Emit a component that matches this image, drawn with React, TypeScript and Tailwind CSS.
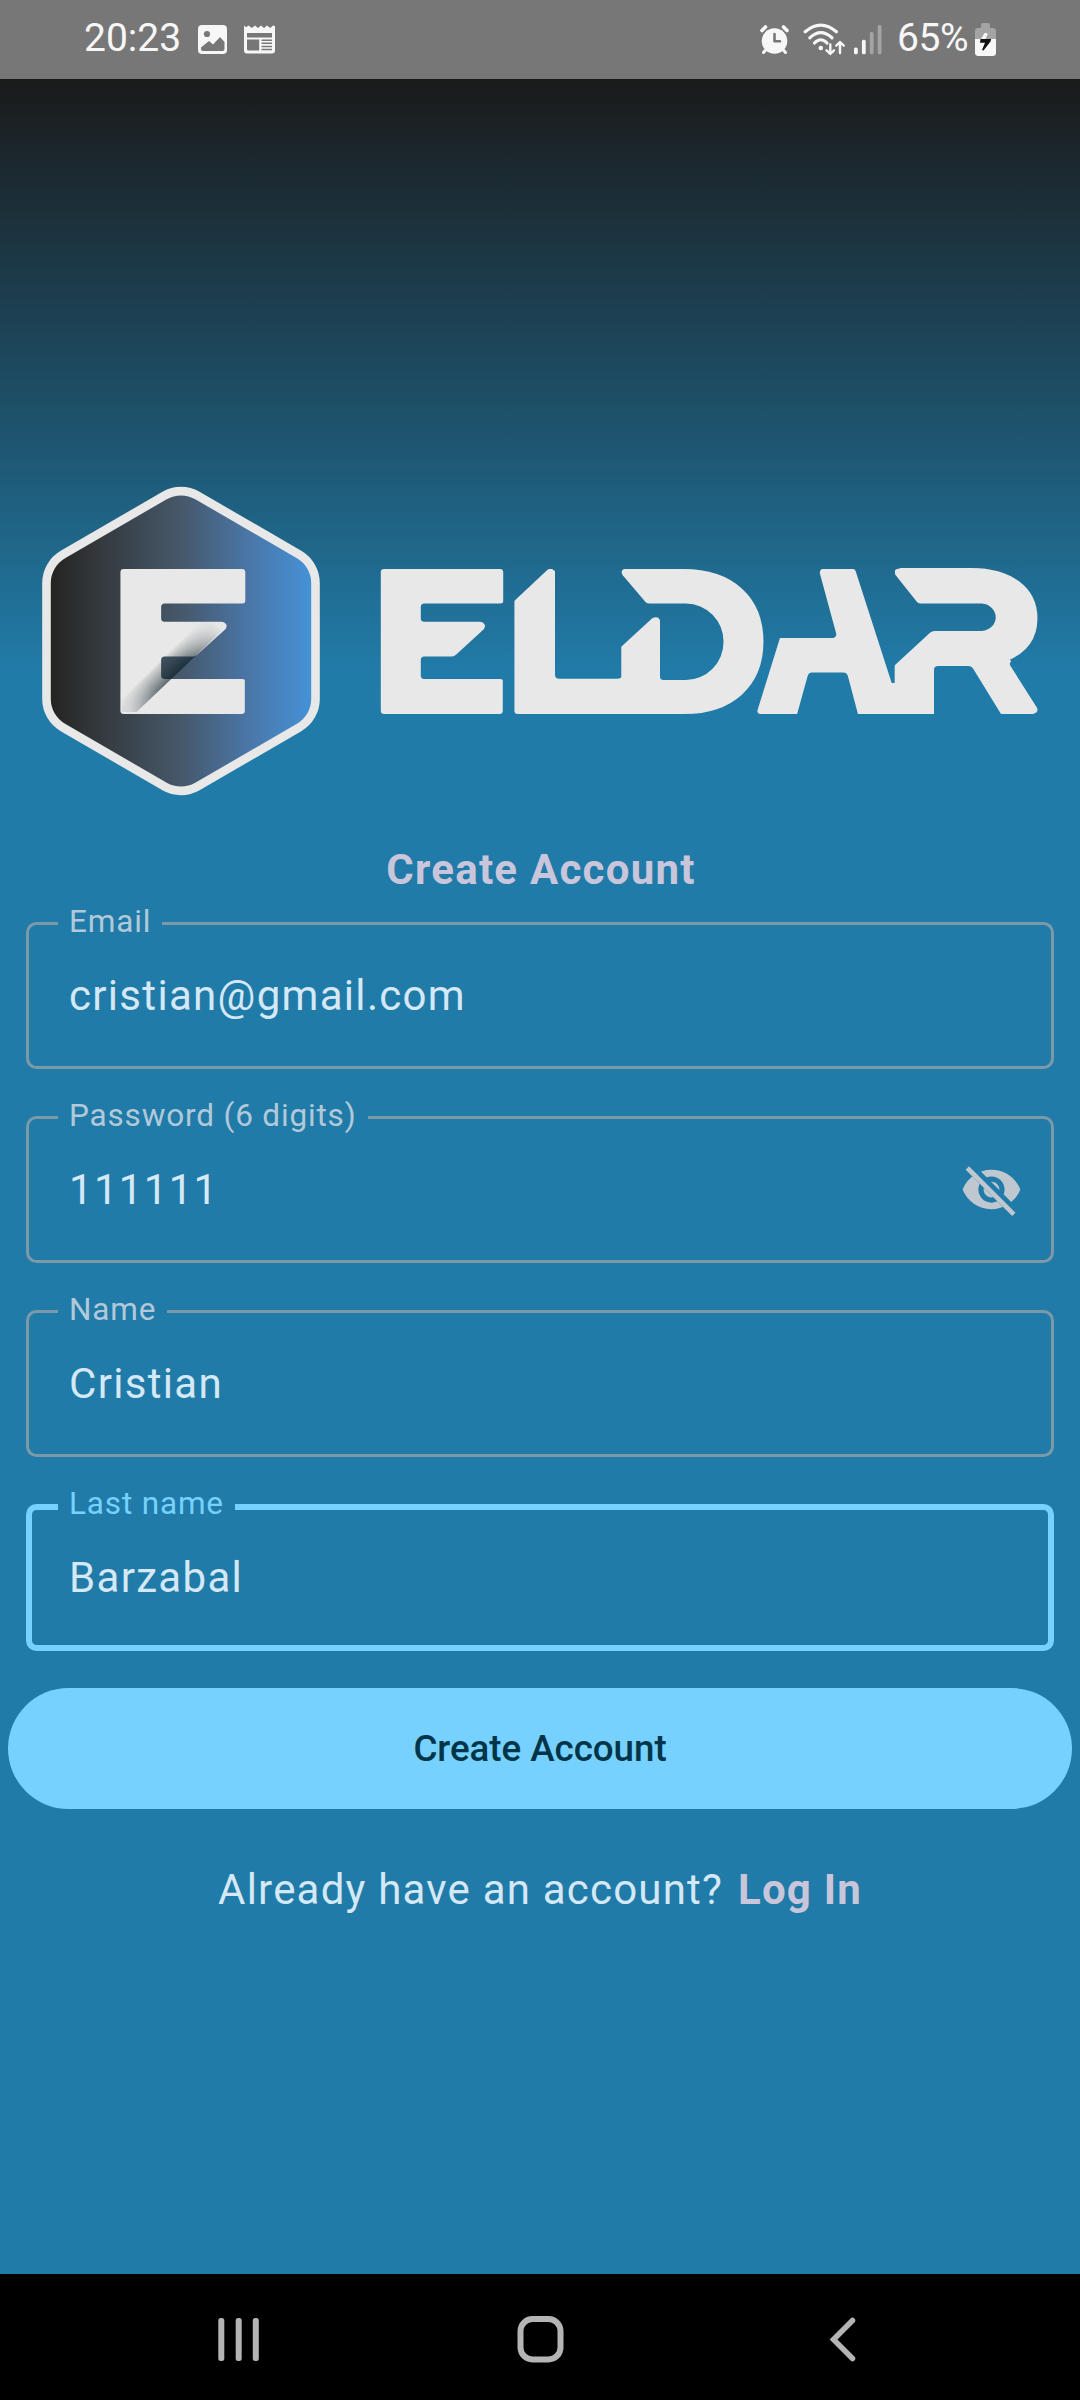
import type { ReactNode } from "react";

const INK = "#e8e8e8";

function StatusBar() {
  return (
    <header className="flex h-[79px] items-start bg-[#777777] font-[Roboto] text-[39px] leading-[47px] text-[#f7f7f7]">
      <div className="ml-[84px] mt-[14.5px] w-[100px]">20:23</div>
      <svg className="ml-[14px] mt-[25px] size-[29px]" viewBox="0 0 29 29">
        <rect width="29" height="29" rx="4" fill="#f7f7f7" />
        <circle cx="9" cy="9" r="3.1" fill="#777777" />
        <path d="M3 22.5 L11 16 L15 19.5 L22 12 L26.5 17 V24 Q26.5 26 24.5 26 H5 Q3 26 3 24 Z" fill="#777777" />
      </svg>
      <svg className="ml-[17px] mt-[25px] h-[29px] w-[31px]" viewBox="0 0 31 29">
        <path d="M0 .5 L2 2.3 L4.5 .5 L7.8 3 L11 .5 L14 3 L17 .5 L20 3 L23 .5 L26.3 3 L29 .5 L31 1 V25.5 Q31 28.5 28 28.5 H3 Q0 28.5 0 25.5 Z" fill="#f7f7f7" />
        <path d="M3 8 H28 V12.5 H3 Z M3 14.5 H15.2 V25.5 H4.5 Q3 25.5 3 24 Z M17.5 14.5 H28 V16 H17.5 Z M17.5 17.6 H28 V19.1 H17.5 Z M17.5 20.7 H28 V22.2 H17.5 Z M17.5 23.8 H28 V25.3 H17.5 Z" fill="#777777" />
      </svg>
      <svg className="ml-[485px] mt-[24px] h-[31px] w-[29px]" viewBox="0 0 29 31">
        <g fill="none" stroke="#f7f7f7" strokeLinecap="round">
          <path d="M2 6.5 L5.5 3 M27 6.5 L23.5 3" strokeWidth="3.6" />
          <path d="M6.5 25 L3.5 28.5 M22.5 25 L25.5 28.5" strokeWidth="3" />
        </g>
        <circle cx="14.5" cy="17" r="12.8" fill="#f7f7f7" />
        <path d="M14.5 10 V17.3 H20" fill="none" stroke="#777777" strokeWidth="2.6" strokeLinecap="round" strokeLinejoin="round" />
      </svg>
      <svg className="ml-[13px] mt-[22px] h-[34px] w-[44px]" viewBox="0 0 44 34">
        <g fill="none" stroke="#f7f7f7" strokeLinecap="round">
          <path d="M3.2 9.8 Q18.8 -3.5 34.4 9.8" strokeWidth="3.2" />
          <path d="M7.8 15.8 Q18.8 5.5 30 15.8" strokeWidth="3.2" />
          <path d="M12.5 21 Q18.8 14.5 25 21" strokeWidth="3.2" />
          <path d="M28.3 22.5 V31 M24.6 28.3 L28.3 32 L32 28.3 M38 31 V21 M34.3 23.7 L38 20 L41.7 23.7" strokeWidth="2.4" strokeLinejoin="round" />
        </g>
        <circle cx="18.8" cy="26" r="2.3" fill="#f7f7f7" />
      </svg>
      <svg className="ml-[8px] mt-[24px] h-[31px] w-[28px]" viewBox="0 0 28 31">
        <rect y="23.5" width="3.8" height="6.8" rx="1.6" fill="#f7f7f7" />
        <rect x="7.9" y="15.8" width="3.8" height="14.5" rx="1.6" fill="#f7f7f7" />
        <rect x="15.8" y="8" width="3.8" height="22.3" rx="1.6" fill="#a4a4a4" />
        <rect x="23.7" y="1" width="3.8" height="29.3" rx="1.6" fill="#a4a4a4" />
      </svg>
      <div className="ml-[15px] mt-[14.5px] w-[78px] tracking-[-0.4px]">65%</div>
      <svg className="mt-[23px] h-[33px] w-[21px]" viewBox="0 0 21 33">
        <path d="M6 5 V2 Q6 0 8 0 H13 Q15 0 15 2 V5 H18 Q21 5 21 8 V16 H0 V8 Q0 5 3 5 Z" fill="#a4a4a4" />
        <path d="M0 16 H21 V29.5 Q21 33 17.5 33 H3.5 Q0 33 0 29.5 Z" fill="#f7f7f7" />
        <path d="M9.5 10 L13 10.5 L10.5 16 H6 Z" fill="#f7f7f7" />
        <path d="M5.5 16 H16.2 L15.5 18.5 L8.5 27.5 L7 27 L10 19.8 H5 Z" fill="#111111" />
      </svg>
    </header>
  );
}

const CUTS = {
  e: "M420.8 607 q0-3.5 3.5-3.5 H500 q4 0 4-4 H524 V683 H504 q0-4-4-4 H424.3 q-3.5 0-3.5-3.5 V660 q0-3.5 3.5-3.5 H452 q2 0 4-1.8 L483.5 629.5 q2.5-3 .8-5.5 q-1.5-2.2-4.5-2.2 H424.3 q-3.5 0-3.5-3.5 Z",
  l: "M555 560 V674.5 q0 4.3 4.3 4.3 H617.4 q4.3 0 4.3-4.3 V560 Z M505 555 V604 L514.2 601 L547 570.2 q4-3.2 7.4 .6 L558 573 V555 Z M621.7 560 H660 V678 H621.7 Z",
  d: "M660 676.5 V620.5 q-1.5-5-7.5-2.5 L621.5 646.5 L610 650 V555 H627 V568.5 q-8 .5-4.5 6.5 L645.5 602 q1.5 1.5 4 1.5 H686 A37.5 38.2 0 0 1 686 680 H663.5 q-3.5 0-3.5-3.5 Z",
  a: "M735 555 H825 V568.5 q-6 0-5 5.5 L836.2 633.5 q.5 4.5-4 4.5 H779 q-3 0-4 3.5 L755 715 L735 700 Z M807.5 676.5 q1-4 4.5-4 H843.5 q3.5 0 4.5 4 L859 718 V725 H795 L796 718 Z",
  r: "M880 555 H900 V568.5 q-7.5 .5-4.5 6.5 L917 602 q1.5 1.5 4 1.5 H982 A15 13.8 0 0 1 982 631 H934.5 q-2.5 0-4.5 1.8 L894.5 665.5 L893 670 H880 Z M934 725 V670 q0-4 4-4 H968 q3.5 0 5.5 3.2 L1001 714 V725 Z M1065 661 H1012 q-3.5 1.5-1.5 5 L1036.8 707.5 q2.2 4.5-3 6 V725 H1065 Z",
};

function Glyph({ id, x, sx, char, children }: { id: keyof typeof CUTS; x: number; sx: number; char: string; children?: ReactNode }) {
  return (
    <>
      <mask id={`cut-${id}`} maskUnits="userSpaceOnUse" x="360" y="550" width="720" height="180">
        <rect x="360" y="550" width="720" height="180" fill="white" />
        <path d={CUTS[id]} fill="black" />
      </mask>
      <g mask={`url(#cut-${id})`}>
        <text
          transform={`translate(${x} 710.5) scale(${sx} 1)`}
          className="font-[Inter] text-[191.7px] font-black"
          fill={INK}
          stroke={INK}
          strokeWidth="6"
          strokeLinejoin="round"
        >
          {char}
        </text>
        {children}
      </g>
    </>
  );
}

function LetterE() {
  return (
    <Glyph id="e" x={374.1} sx={1.148} char="E">
      <rect x="425" y="621" width="62" height="36" fill={INK} />
    </Glyph>
  );
}

function Logo() {
  return (
    <svg className="block h-[766px] w-full" viewBox="0 79 1080 766" role="img" aria-label="Eldar">
      <defs>
        <linearGradient id="badge" x1="50" x2="312" y1="0" y2="0" gradientUnits="userSpaceOnUse">
          <stop offset="0" stopColor="#242421" />
          <stop offset="0.2" stopColor="#343a3f" />
          <stop offset="0.5" stopColor="#46586a" />
          <stop offset="0.76" stopColor="#4a76a8" />
          <stop offset="1" stopColor="#4592d8" />
        </linearGradient>
        <linearGradient id="fold" x1="181" y1="669.5" x2="166" y2="653.5" gradientUnits="userSpaceOnUse">
          <stop offset="0" stopColor="#0a1c26" stopOpacity="0.7" />
          <stop offset="0.5" stopColor="#15262c" stopOpacity="0.35" />
          <stop offset="1" stopColor="#20302f" stopOpacity="0" />
        </linearGradient>
        <linearGradient id="foldFade" x1="132" y1="712" x2="226" y2="624" gradientUnits="userSpaceOnUse">
          <stop offset="0" stopColor="#333" />
          <stop offset="0.25" stopColor="#ccc" />
          <stop offset="0.55" stopColor="#fff" />
          <stop offset="0.95" stopColor="#000" />
        </linearGradient>
        <mask id="foldMask" maskUnits="userSpaceOnUse" x="110" y="600" width="140" height="120">
          <rect x="110" y="600" width="140" height="120" fill="url(#foldFade)" />
        </mask>
      </defs>
      <path
        d="M197.4 495.5 L299.1 554.5 A33 33 0 0 1 315.5 583 L315.5 699 A33 33 0 0 1 299.1 727.5 L197.4 786.5 A33 33 0 0 1 164.6 786.5 L62.9 727.5 A33 33 0 0 1 46.5 699 L46.5 583 A33 33 0 0 1 62.9 554.5 L164.6 495.5 A33 33 0 0 1 197.4 495.5 Z"
        fill="url(#badge)"
        stroke={INK}
        strokeWidth="8.6"
      />
      <g transform="translate(-268.2 0) scale(1.0203 1)">
        <LetterE />
      </g>
      <path d="M136.5 712 L226.5 626.5 L226 622 H200 L122 700 V712 Z" fill="url(#fold)" mask="url(#foldMask)" />
      <LetterE />
      <Glyph id="l" x={507} sx={1.249} char="L" />
      <Glyph id="d" x={614.8} sx={1.102} char="D" />
      <Glyph id="a" x={756.2} sx={0.955} char="A">
        <rect x="790" y="638" width="65" height="34.5" fill={INK} />
        <rect x="866" y="683" width="40" height="30.5" fill={INK} />
      </Glyph>
      <Glyph id="r" x={887.5} sx={1.21} char="R">
        <rect x="925" y="631" width="60" height="35" fill={INK} />
      </Glyph>
    </svg>
  );
}

function HiddenEye() {
  return (
    <svg className="size-[63px]" viewBox="0 0 24 24" fill="#bfc7d0">
      <mask id="strike" maskUnits="userSpaceOnUse" x="0" y="0" width="24" height="24">
        <rect width="24" height="24" fill="white" />
        <path d="M3.27 3 L21 20.73" stroke="black" strokeWidth="3.59" />
      </mask>
      <path
        mask="url(#strike)"
        fillRule="evenodd"
        d="M12 4.5C7 4.5 2.73 7.61 1 12c1.73 4.39 6 7.5 11 7.5s9.27-3.11 11-7.5c-1.73-4.39-6-7.5-11-7.5z M12 17c-2.76 0-5-2.24-5-5s2.24-5 5-5 5 2.24 5 5-2.24 5-5 5z M12 9c-1.66 0-3 1.34-3 3s1.34 3 3 3 3-1.34 3-3-1.34-3-3-3z"
      />
      <path d="M2.8 3.8 L20.5 21.5" stroke="#bfc7d0" strokeWidth="1.8" />
    </svg>
  );
}

function Field({ label, value, icon }: { label: string; value: string; icon?: ReactNode }) {
  return (
    <fieldset className="mx-[26px] h-[162px] rounded-[10.5px] border-[3px] border-[#7c99a8] pl-[29px]">
      <legend className="h-[33px] px-[11px] text-[31.5px] leading-[29px] tracking-[0.84px] text-[#b2c9d9]">{label}</legend>
      <div className="flex h-[111px] items-center justify-between pl-[11px] pr-[28px] text-[42px] leading-[50px] tracking-[1.3125px] text-[#d4e8f6]">
        <span>{value}</span>
        {icon}
      </div>
    </fieldset>
  );
}

function FocusedField({ label, value }: { label: string; value: string }) {
  return (
    <fieldset className="mx-[26px] h-[161px] rounded-[10.5px] border-[6px] border-[#76d1ff] pl-[26px]">
      <legend className="h-[34px] px-[11px] text-[31.5px] leading-[27px] tracking-[0.84px] text-[#76d1ff]">{label}</legend>
      <div className="flex h-[107px] items-center pl-[11px] text-[42px] leading-[50px] tracking-[1.3125px] text-[#d4e8f6]">{value}</div>
    </fieldset>
  );
}

export default function App() {
  return (
    <div className="flex h-[2400px] w-[1080px] flex-col overflow-hidden bg-[#217ba8] font-[Roboto]">
      <StatusBar />
      <main className="flex grow flex-col bg-[linear-gradient(to_bottom,#1a1a1a_0px,#217ba8_592px)]">
        <Logo />
        <h1 className="pl-[2px] text-center text-[42px] font-bold leading-[50px] tracking-[1.25px] text-[#c9c6db]">Create Account</h1>
        <form className="mt-[12px] flex flex-col">
          <div className="flex flex-col gap-8">
            <Field label="Email" value="cristian@gmail.com" />
            <Field label="Password (6 digits)" value="111111" icon={<HiddenEye />} />
            <Field label="Name" value="Cristian" />
          </div>
          <div className="mt-[33px]">
            <FocusedField label="Last name" value="Barzabal" />
          </div>
          <button type="button" className="mx-2 mt-[37px] h-[121px] rounded-full bg-[#76d1ff] text-[36.75px] font-medium tracking-[-0.05px] text-[#003549]">
            Create Account
          </button>
        </form>
        <p className="mt-[56px] flex justify-center gap-[15px] text-[42px] leading-[50px] tracking-[1.2px] text-[#d4e8f6]">
          <span>Already have an account?</span>
          <strong className="font-bold text-[#c9c6db]">Log In</strong>
        </p>
      </main>
      <nav className="flex h-[126px] shrink-0 bg-black pt-[42px]">
        <svg className="ml-[218px] h-[48px] w-[42px]" viewBox="0 0 42 48" fill="#b4b4b4">
          <rect x="0.3" y="2" width="6" height="43" rx="2.5" />
          <rect x="17.7" y="2" width="6" height="43" rx="2.5" />
          <rect x="34.8" y="2" width="6" height="43" rx="2.5" />
        </svg>
        <svg className="ml-[257px] size-[48px]" viewBox="0 0 48 48" fill="none" stroke="#b4b4b4" strokeWidth="6">
          <rect x="3.5" y="3" width="40" height="40.5" rx="12" />
        </svg>
        <svg className="ml-[264px] h-[48px] w-[30px]" viewBox="0 0 30 48" fill="none" stroke="#b4b4b4" strokeWidth="5.5" strokeLinecap="round">
          <path d="M23.5 4.5 L4.5 23.5 L23.5 42.5" />
        </svg>
      </nav>
    </div>
  );
}
